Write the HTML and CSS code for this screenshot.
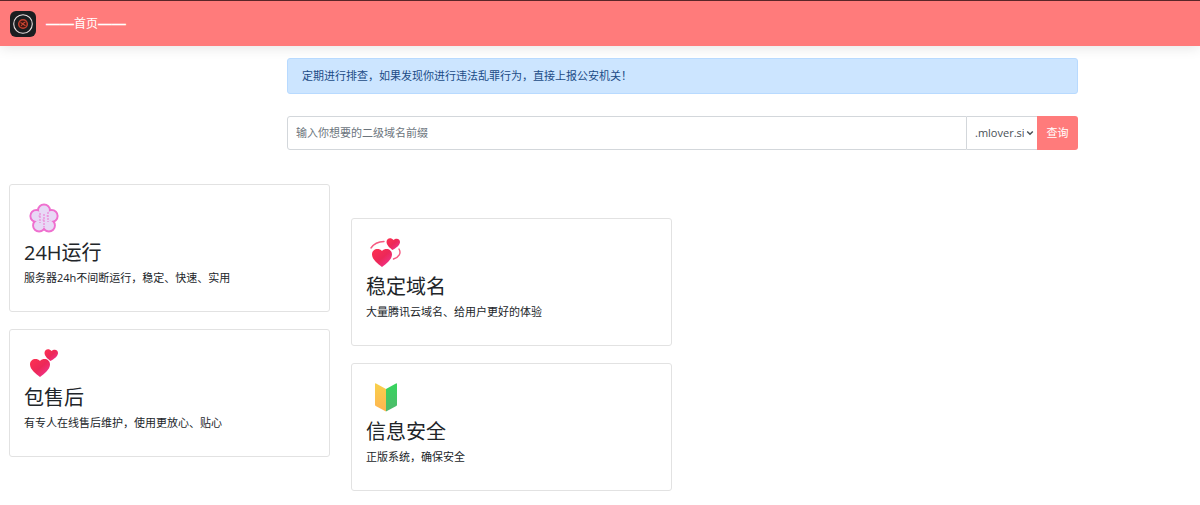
FILE: index.html
```html
<!DOCTYPE html>
<html lang="zh-CN">
<head>
<meta charset="utf-8">
<title>首页</title>
<link rel="stylesheet" href="styles.css">
</head>
<body>
<header class="navbar">
  <a class="brand" href="#" aria-label="Logo">
    <svg class="logo" viewBox="0 0 26 26" aria-hidden="true">
      <rect width="26" height="26" rx="6" fill="#1b1d20"/>
      <circle cx="13" cy="13" r="9.3" fill="none" stroke="#e9dede" stroke-width="1.1"/>
      <circle cx="13" cy="13" r="4.3" fill="#3a1612" stroke="#c5402f" stroke-width="1.5"/>
      <path d="M10.5 11.5l2 1.2 2.8-1.7M11 15l1.8-2 2.7 1.8" fill="none" stroke="#cf4733" stroke-width="1.1"/>
    </svg>
  </a>
  <nav>
    <a class="nav-link" href="#"><span class="dash">——</span>首页<span class="dash">——</span></a>
  </nav>
</header>
<main>
  <section class="search">
    <div class="alert" role="alert">定期进行排查，如果发现你进行违法乱罪行为，直接上报公安机关！</div>
    <form class="input-group">
      <input class="prefix" type="text" placeholder="输入你想要的二级域名前缀" aria-label="二级域名前缀">
      <div class="select-wrap">
        <select class="domain" aria-label="域名"><option>.mlover.site</option></select>
        <svg class="chevron" viewBox="0 0 8 8" aria-hidden="true"><path d="M1.2 2.5L4 5.3l2.8-2.8" fill="none" stroke="#495057" stroke-width="1.5"/></svg>
      </div>
      <button class="submit" type="button">查询</button>
    </form>
  </section>
  <section class="features">
    <div class="column">
      <article class="card">
        <svg class="icon" viewBox="0 0 40 32" aria-hidden="true">
          <g fill="#e8d9f6" stroke="#ef70cf" stroke-width="2.4">
            <circle cx="20" cy="8.5" r="5.8"/><circle cx="27.6" cy="14" r="5.8"/><circle cx="24.9" cy="23.500" r="5.8"/><circle cx="15.1" cy="23.500" r="5.8"/><circle cx="12.4" cy="14" r="5.8"/>
          </g>
          <g fill="#e8d9f6"><circle cx="20" cy="8.5" r="5"/><circle cx="27.6" cy="14" r="5"/><circle cx="24.9" cy="23.500" r="5"/><circle cx="15.1" cy="23.500" r="5"/><circle cx="12.4" cy="14" r="5"/><circle cx="20" cy="17" r="6"/></g>
          <path d="M16 11v10M20 12v13M24 10v10M14.500 14h3M18.500 18h3M22.500 14h3" fill="none" stroke="#ec86d6" stroke-width="1.2" stroke-dasharray="2 1"/>
        </svg>
        <h2>24H运行</h2>
        <p>服务器24h不间断运行，稳定、快速、实用</p>
      </article>
      <article class="card">
        <svg class="icon" viewBox="0 0 40 32" aria-hidden="true">
          <defs><linearGradient id="heart" x1="0" y1="0" x2="1" y2="1"><stop offset="0" stop-color="#ff3151"/><stop offset=".5" stop-color="#ec2858"/><stop offset="1" stop-color="#f3369e"/></linearGradient></defs>
          <path d="M16 30C12 27 6 22.500 6 17.500C6 12 12.500 10.500 16 14C19.500 10.500 26 12 26 17.500C26 22.500 20 27 16 30Z" fill="url(#heart)"/>
          <path d="M26.500 14C24 12 20.500 9 20.500 6C20.500 2 25 1 27.500 4C30 1.500 34.500 2.500 34 6.500C33.500 9.500 30 12 26.500 14Z" fill="url(#heart)"/>
        </svg>
        <h2>包售后</h2>
        <p>有专人在线售后维护，使用更放心、贴心</p>
      </article>
    </div>
    <div class="column lowered">
      <article class="card">
        <svg class="icon" viewBox="0 0 40 32" aria-hidden="true">
          <path d="M16 31C12 28 6 23.500 6 18.500C6 13 12.500 11.500 16 15C19.500 11.500 26 13 26 18.500C26 23.500 20 28 16 31Z" fill="url(#heart)"/>
          <path d="M26.500 14C24 12 20.500 9 20.500 6C20.500 2 25 1 27.500 4C30 1.500 34.500 2.500 34 6.500C33.500 9.500 30 12 26.500 14Z" fill="url(#heart)"/>
          <path d="M5 12C8 7.500 12 5.700 18 5.500M33 13C35.500 17 33 21.500 27.500 23" fill="none" stroke="#f65a82" stroke-width="1.4" stroke-linecap="round"/>
        </svg>
        <h2>稳定域名</h2>
        <p>大量腾讯云域名、给用户更好的体验</p>
      </article>
      <article class="card">
        <svg class="icon" viewBox="0 0 40 32" aria-hidden="true">
          <defs>
            <linearGradient id="gold" x2="0" y2="1"><stop stop-color="#f8d04b"/><stop offset="1" stop-color="#ffb451"/></linearGradient>
            <linearGradient id="green" x2="0" y2="1"><stop stop-color="#36d65d"/><stop offset="1" stop-color="#50b86d"/></linearGradient>
          </defs>
          <path d="M9 3q0-1 1-.5L20 8v22.500L9.700 25q-.7-.5-.7-1.500Z" fill="url(#gold)"/>
          <path d="M31 3q0-1-1-.5L20 8v22.500L30.300 25q.7-.5.700-1.500Z" fill="url(#green)"/>
        </svg>
        <h2>信息安全</h2>
        <p>正版系统，确保安全</p>
      </article>
    </div>
  </section>
</main>
</body>
</html>
```
FILE: styles.css
```css
* { box-sizing: border-box; }

body {
  margin: 0;
  background: #fff;
  color: #212529;
  font: 11px/18px "Open Sans", "Noto Sans CJK SC", sans-serif;
}

input, select, button { font: inherit; }

.navbar {
  display: flex;
  align-items: center;
  gap: 10px;
  height: 46px;
  padding: 0 10px;
  border-top: 1px solid #5a2528;
  background: #ff7b7b;
  box-shadow: 0 2px 12px rgba(0, 0, 0, .1);
}

.brand, .logo { display: block; width: 26px; height: 26px; }

.nav-link {
  display: flex;
  align-items: center;
  color: #fff;
  font-size: 12px;
  text-decoration: none;
}

.dash {
  font-family: "Liberation Sans", sans-serif;
  font-size: 14px;
  font-weight: 700;
}

.search {
  display: grid;
  gap: 22px;
  margin: 12px 122px 34px 287px;
}

.alert {
  padding: 8px 14px;
  border: 1px solid #b8daff;
  border-radius: 3px;
  background: #cce5ff;
  color: #1b4b86;
}

.input-group { display: flex; height: 34px; }

.prefix {
  flex: 1;
  min-width: 0;
  padding: 0 8px;
  border: 1px solid #d3d7db;
  border-radius: 3px 0 0 3px;
  color: #495057;
}

.prefix::placeholder { color: #6c757d; opacity: 1; }

.select-wrap { position: relative; display: flex; width: 70px; }

.domain {
  appearance: none;
  width: 100%;
  padding: 0 13px 0 8px;
  border: solid #d3d7db;
  border-width: 1px 0;
  border-radius: 0;
  background: #fff;
  color: #495057;
}

.chevron {
  position: absolute;
  top: 13px;
  right: 3px;
  width: 8px;
  height: 8px;
  pointer-events: none;
}

.submit {
  width: 41px;
  padding: 0;
  border: 0;
  border-radius: 0 3px 3px 0;
  background: #ff7b7b;
  color: #fff;
}

.features {
  display: grid;
  grid-template-columns: 1fr 1fr;
  gap: 21px;
  padding: 0 44% 14px 9px;
}

.column { display: grid; align-content: start; gap: 17px; }

.lowered { padding-top: 34px; }

.card {
  padding: 17px 14px 24px;
  border: 1px solid #e2e2e2;
  border-radius: 3px;
}

.icon { display: block; width: 40px; height: 32px; }

h2 {
  margin: 7px 0 4px;
  font-size: 20px;
  font-weight: 400;
  line-height: 24px;
}

p { margin: 0; }
```
